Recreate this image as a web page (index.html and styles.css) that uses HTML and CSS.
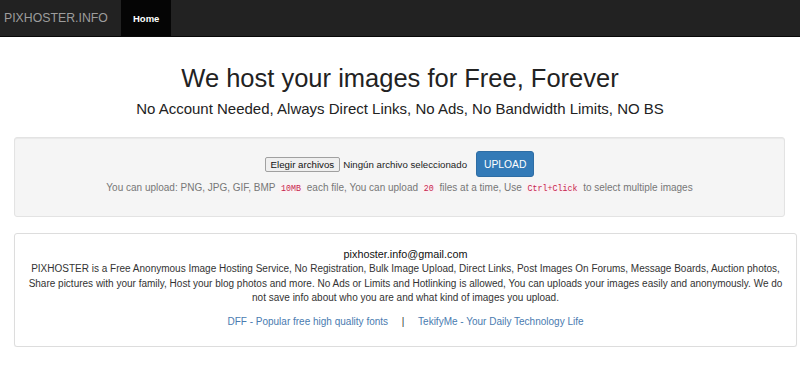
FILE: index.html
```html
<!DOCTYPE html>
<html lang="en">

<head>
    <meta charset="UTF-8">
    <meta name="viewport" content="width=device-width, initial-scale=1.0">
    <title>PIXHOSTER.INFO - Free Image Hosting</title>
    <link rel="stylesheet" href="styles.css">
</head>

<body>
    <!-- Navbar -->
    <nav class="navbar">
        <a class="brand" href="#">PIXHOSTER.INFO</a>
        <ul class="nav">
            <li class="active"><a href="#">Home</a></li>
        </ul>
    </nav>

    <!-- Header -->
    <div class="hero">
        <h1>We host your images for Free, Forever</h1>
        <p class="lead">No Account Needed, Always Direct Links, No Ads, No Bandwidth Limits, NO BS</p>
    </div>

    <!-- Upload Form -->
    <div class="well">
        <form class="upload-form">
            <div class="upload-row">
                <span class="file-input">
                    <span class="file-btn">Elegir archivos</span>
                    <span class="file-name">Ningún archivo seleccionado</span>
                </span>
                <button type="button" class="btn-upload">UPLOAD</button>
            </div>
            <p class="help">You can upload: PNG, JPG, GIF, BMP <code>10MB</code> each file, You can upload <code>20</code> files at a time, Use <code>Ctrl+Click</code> to select multiple images</p>
        </form>
    </div>

    <!-- About -->
    <div class="panel">
        <p class="email">pixhoster.info@gmail.com</p>
        <p class="about">PIXHOSTER is a Free Anonymous Image Hosting Service, No Registration, Bulk Image Upload, Direct Links, Post Images On Forums, Message Boards, Auction photos, Share pictures with your family, Host your blog photos and more. No Ads or Limits and Hotlinking is allowed, You can uploads your images easily and anonymously. We do not save info about who you are and what kind of images you upload.</p>
        <p class="links">
            <a href="#">DFF - Popular free high quality fonts</a>
            <span class="sep">|</span>
            <a href="#">TekifyMe - Your Daily Technology Life</a>
        </p>
    </div>
</body>

</html>
```

FILE: styles.css
```css
/* General */
body {
    margin: 0;
    font-family: 'Liberation Sans', Arial, sans-serif;
    font-size: 11px;
    color: #333;
    background: #fff;
}

a {
    text-decoration: none;
}

/* Navbar */
.navbar {
    display: flex;
    align-items: stretch;
    height: 37px;
    background: #222;
    border-bottom: 1px solid #080808;
    box-sizing: border-box;
}

.brand {
    display: flex;
    align-items: center;
    width: 117px;
    padding-left: 4px;
    font-size: 12.3px;
    color: #9d9d9d;
}

.nav {
    display: flex;
    margin: 0;
    padding: 0;
    list-style: none;
}

.nav li a {
    display: flex;
    align-items: center;
    height: 100%;
    padding: 0 12px;
    font-size: 9.5px;
    font-weight: bold;
    color: #9d9d9d;
}

.nav li.active a {
    background: #050505;
    color: #fff;
}

/* Header */
.hero {
    text-align: center;
    padding-top: 26px;
}

h1 {
    margin: 0;
    font-size: 25.5px;
    font-weight: 400;
    color: #222;
    line-height: 30px;
}

.lead {
    margin: 6px 0 0;
    font-size: 15px;
    color: #222;
    line-height: 20px;
}

/* Upload well */
.well {
    margin: 18px 15px 0 14px;
    height: 80px;
    box-sizing: border-box;
    background: #f5f5f5;
    border: 1px solid #e3e3e3;
    border-radius: 3px;
    box-shadow: inset 0 1px 1px rgba(0, 0, 0, 0.05);
    text-align: center;
}

.upload-row {
    display: flex;
    justify-content: center;
    align-items: center;
    gap: 9px;
    margin-top: 13px;
}

.file-input {
    display: flex;
    align-items: center;
    gap: 3px;
    font-size: 9.7px;
}

.file-btn {
    padding: 1px 5px;
    background: #efefef;
    border: 1px solid #a0a0a0;
    border-radius: 2px;
    color: #111;
}

.file-name {
    color: #222;
}

.btn-upload {
    height: 26px;
    padding: 0 7px;
    font-family: inherit;
    font-size: 10.3px;
    color: #fff;
    background: #337ab7;
    border: 1px solid #2e6da4;
    border-radius: 3px;
}

.help {
    margin: 5px 0 0;
    font-size: 10px;
    color: #777;
}

code {
    padding: 1px 3px;
    font-family: 'Liberation Mono', monospace;
    font-size: 8.3px;
    color: #c7254e;
    background: #f9f2f4;
    border-radius: 3px;
}

/* About panel */
.panel {
    margin: 16px 3px 0 14px;
    padding: 13px 8px 17px;
    background: #fff;
    border: 1px solid #ddd;
    border-radius: 3px;
    box-shadow: 0 1px 1px rgba(0, 0, 0, 0.05);
    text-align: center;
}

.email {
    margin: 0;
    font-size: 10.8px;
    color: #111;
    line-height: 15px;
}

.about {
    margin: 0;
    font-size: 10px;
    line-height: 14.5px;
    color: #333;
}

.links {
    margin: 8px 0 0;
    font-size: 10px;
    line-height: 15px;
}

.links a {
    color: #4a7bb0;
}

.sep {
    margin: 0 11px;
    color: #333;
}
```
